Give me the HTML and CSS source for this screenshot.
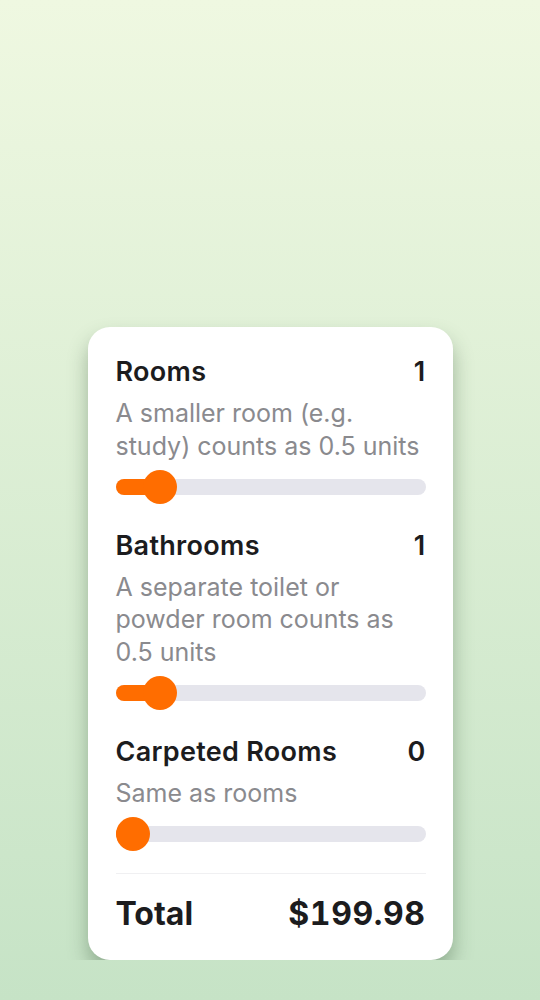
FILE: index.html
```html
<!DOCTYPE html>
<html lang="en">
<head>
  <meta charset="UTF-8" />
  <meta name="viewport" content="width=device-width, initial-scale=1" />
  <title>Cleaning Quote</title>
  <link rel="stylesheet" href="styles.css">
</head>
<body>
  <div class="card">
    <!-- Rooms -->
    <div class="option">
      <div class="option-head">
        <span class="option-title">Rooms</span>
        <span class="option-value">1</span>
      </div>
      <p class="option-desc">A smaller room (e.g. study) counts as 0.5 units</p>
      <div class="slider" style="--v: 0.1">
        <div class="slider-fill"></div>
        <div class="slider-thumb"></div>
      </div>
    </div>

    <!-- Bathrooms -->
    <div class="option">
      <div class="option-head">
        <span class="option-title">Bathrooms</span>
        <span class="option-value">1</span>
      </div>
      <p class="option-desc">A separate toilet or powder room counts as 0.5 units</p>
      <div class="slider" style="--v: 0.1">
        <div class="slider-fill"></div>
        <div class="slider-thumb"></div>
      </div>
    </div>

    <!-- Carpeted rooms -->
    <div class="option">
      <div class="option-head">
        <span class="option-title">Carpeted Rooms</span>
        <span class="option-value">0</span>
      </div>
      <p class="option-desc">Same as rooms</p>
      <div class="slider" style="--v: 0">
        <div class="slider-fill"></div>
        <div class="slider-thumb"></div>
      </div>
    </div>

    <div class="total">
      <span>Total</span>
      <span class="total-price">$199.98</span>
    </div>
  </div>
</body>
</html>
```

FILE: styles.css
```css
html {
  min-height: 100%;
  background: linear-gradient(#eff8e1, #c6e3c6);
}

body {
  margin: 0;
  font-family: Inter, 'Noto Sans', sans-serif;
  color: #1c1c1e;
  padding-top: 327px;
}

.card {
  width: 365px;
  margin: 0 auto;
  box-sizing: border-box;
  padding: 31px 27px 26.6px 28px;
  background: #fff;
  border-radius: 22px;
  box-shadow: 0 12px 20px rgba(60, 90, 60, 0.4);
}

.option {
  margin-bottom: 27.5px;
}

.option-head {
  display: flex;
  justify-content: space-between;
  font-size: 27px;
  line-height: 28px;
  font-weight: 600;
  letter-spacing: 0.3px;
}

.option-desc {
  margin: 11px 0 8px;
  font-size: 25px;
  line-height: 32.5px;
  color: #8a8a8e;
}

.slider {
  position: relative;
  height: 34px;
  display: flex;
  align-items: center;
}

.slider::before {
  content: "";
  flex: 1;
  height: 16px;
  border-radius: 8px;
  background: #e5e5ec;
}

.slider-fill {
  position: absolute;
  left: 0;
  top: 9px;
  height: 16px;
  border-radius: 8px;
  background: #ff6d00;
  width: calc(var(--v) * (100% - 34px) + 17px);
}

.slider-thumb {
  position: absolute;
  top: 0;
  left: calc(var(--v) * (100% - 34px));
  width: 34px;
  height: 34px;
  border-radius: 50%;
  background: #ff6d00;
}

.total {
  display: flex;
  justify-content: space-between;
  border-top: 1px solid #f0f0f2;
  margin-top: -5.5px;
  padding-top: 21.4px;
  font-size: 32px;
  line-height: 38px;
  font-weight: 700;
}

.total-price {
  font-variant-numeric: tabular-nums;
  letter-spacing: 0.6px;
}
```
